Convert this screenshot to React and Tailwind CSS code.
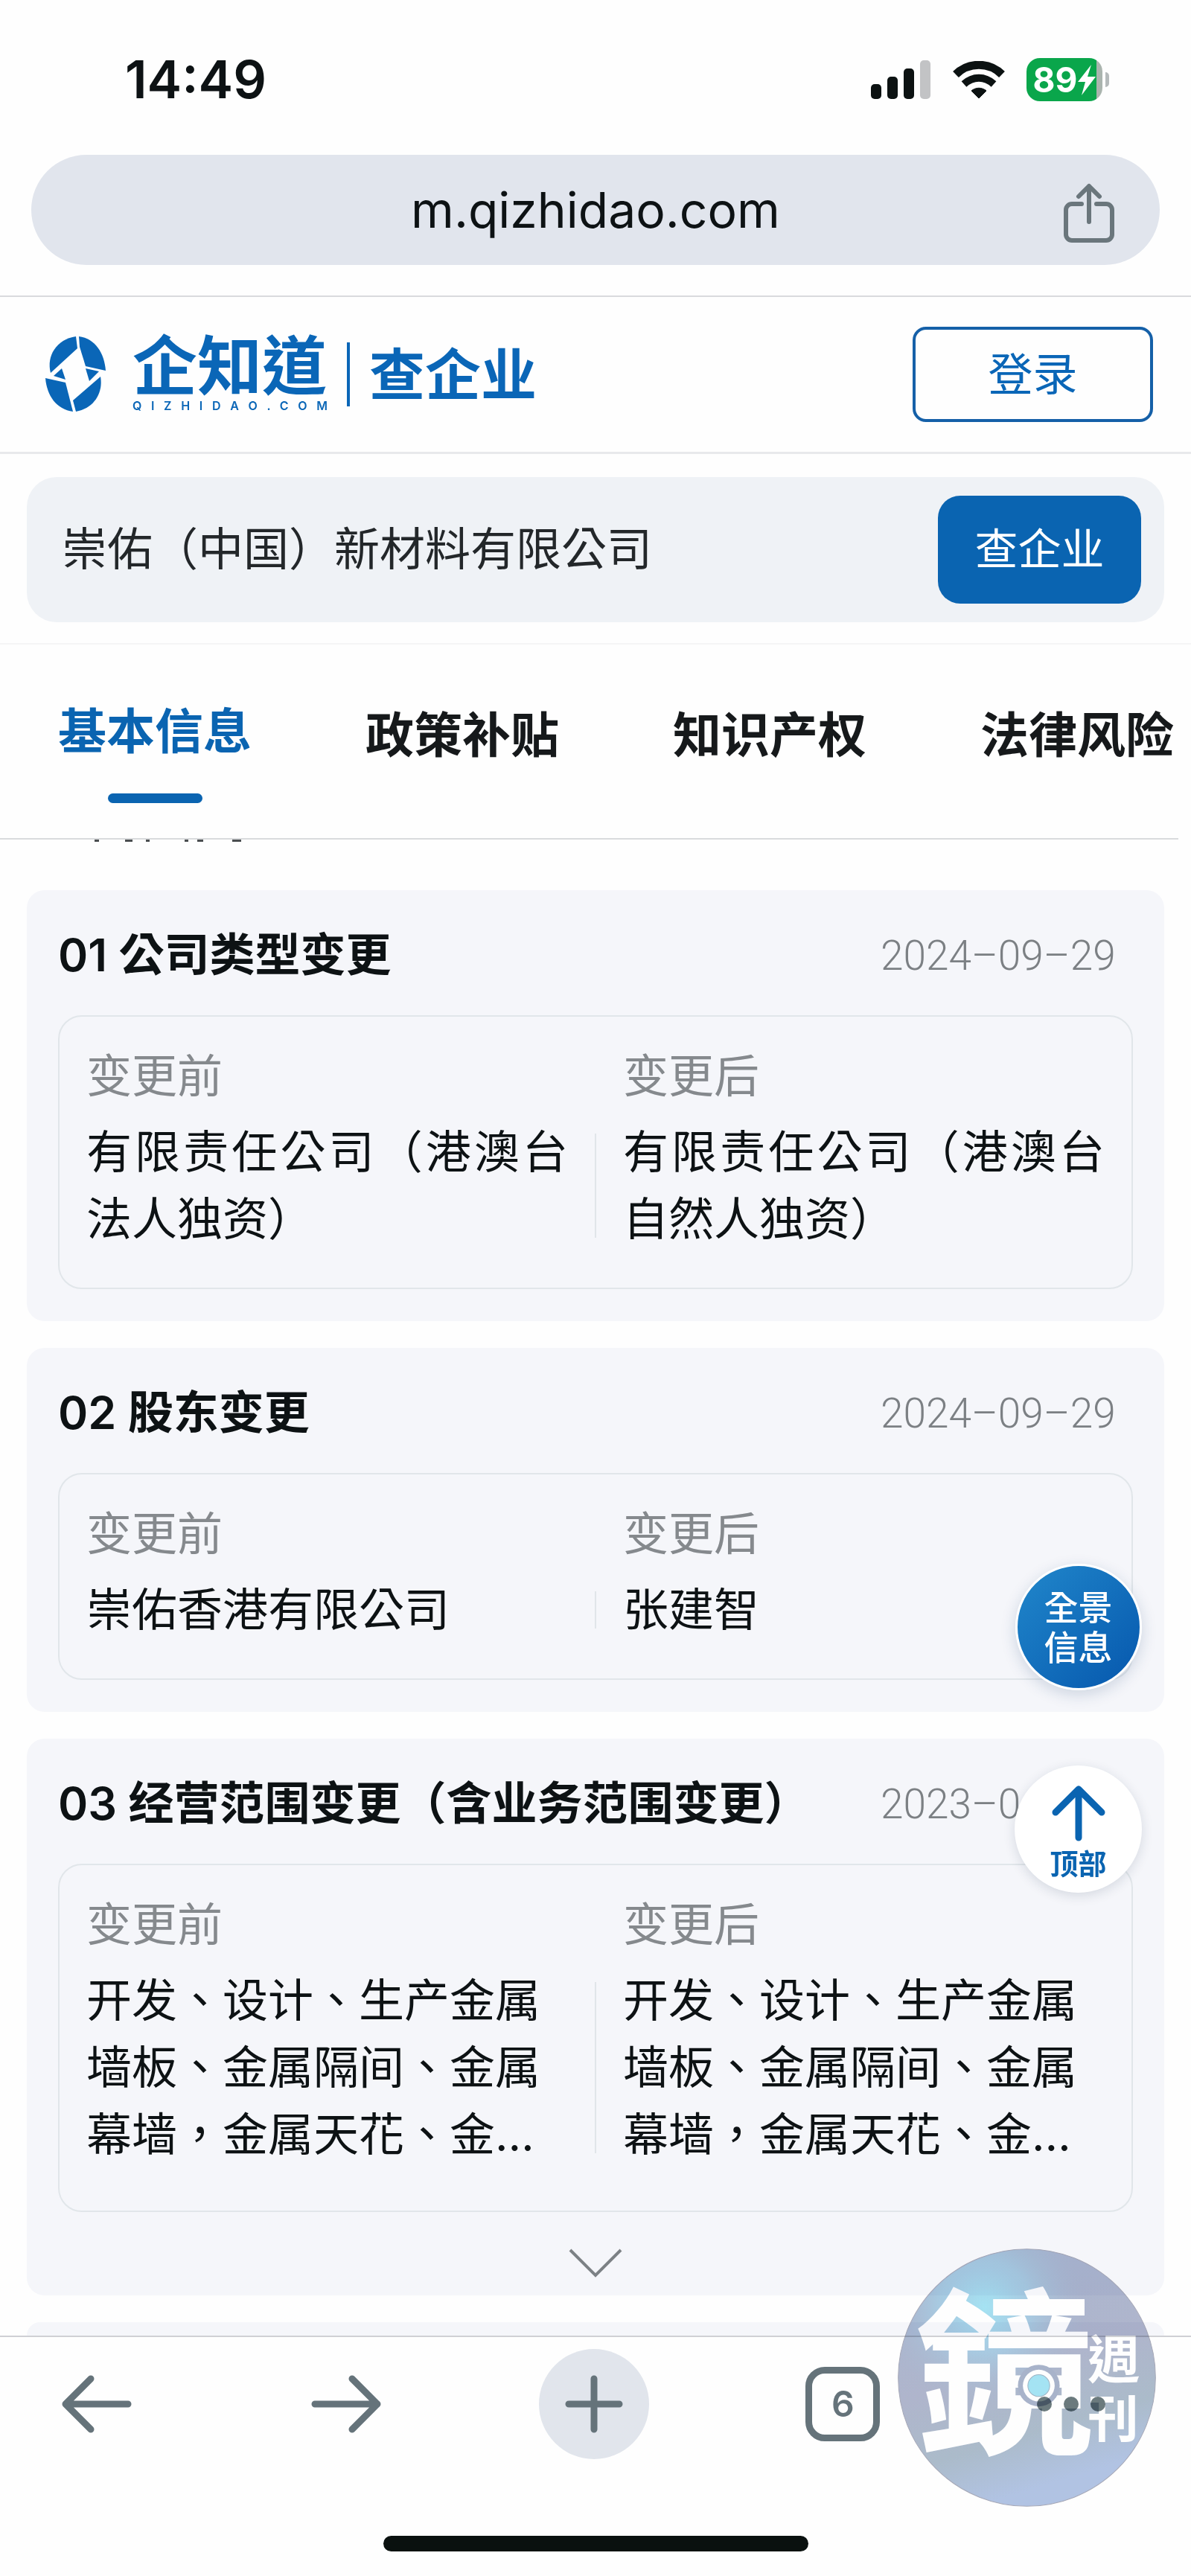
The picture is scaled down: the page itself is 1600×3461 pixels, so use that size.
import { useState } from 'react';

const TABS = ['基本信息', '政策补贴', '知识产权', '法律风险'];

const RECORDS = [
  {
    no: '01',
    title: '公司类型变更',
    date: '2024–09–29',
    before: '有限责任公司（港澳台法人独资）',
    after: '有限责任公司（港澳台自然人独资）',
  },
  {
    no: '02',
    title: '股东变更',
    date: '2024–09–29',
    before: '崇佑香港有限公司',
    after: '张建智',
  },
  {
    no: '03',
    title: '经营范围变更（含业务范围变更）',
    date: '2023–0',
    before: '开发、设计、生产金属墙板、金属隔间、金属幕墙，金属天花、金…',
    after: '开发、设计、生产金属墙板、金属隔间、金属幕墙，金属天花、金…',
    clamped: true,
  },
];

function StatusBar() {
  return (
    <div className="flex items-center justify-between h-[86px] mt-16 pl-[168px] pr-[110px]">
      <span className="text-[70px] leading-none font-semibold">14:49</span>
      <div className="flex items-center gap-[29px]">
        <svg width="81" height="52" viewBox="0 0 81 52" aria-hidden="true">
          <rect x="0" y="32" width="14" height="20" rx="5" fill="#0c1212" />
          <rect x="22" y="22" width="14" height="30" rx="5" fill="#0c1212" />
          <rect x="44" y="11" width="14" height="41" rx="5" fill="#0c1212" />
          <rect x="66" y="0" width="14" height="52" rx="5" fill="#c2c3c5" />
        </svg>
        <svg width="70" height="50" viewBox="0 0 70 50" fill="none" stroke="#0c1212" aria-hidden="true">
          <path d="M4 18C21 1 49 1 66 18" strokeWidth="11" />
          <path d="M15 31C27 20 43 20 55 31" strokeWidth="10" />
          <path d="M25 40C31 35 39 35 45 40L35 50Z" fill="#0c1212" strokeWidth="1" />
        </svg>
        <div className="flex items-center gap-1">
          <div className="flex items-center justify-center w-[102px] h-[58px] rounded-[18px] bg-linear-to-r from-[#0aa64b] from-92% to-[#aab4ae] to-92% text-white">
            <span className="text-[46px] leading-none font-bold">89</span>
            <svg width="25" height="44" viewBox="0 0 25 44" fill="#fff" aria-hidden="true">
              <path d="M19 2L1 25h10L6 43 25 18H14Z" />
            </svg>
          </div>
          <span className="w-[5px] h-5 rounded-r-full bg-[#b5babb]" />
        </div>
      </div>
    </div>
  );
}

function AddressBar() {
  return (
    <div className="relative flex items-center justify-center h-[148px] mx-[42px] mt-[58px] rounded-full bg-[#e1e5ed]">
      <span className="text-[66px] leading-none">m.qizhidao.com</span>
      <button type="button" aria-label="分享" className="absolute right-[61px] top-[38px]">
        <svg width="68" height="80" viewBox="0 0 68 80" fill="none" stroke="#6a767c" strokeWidth="6" strokeLinecap="round" strokeLinejoin="round">
          <path d="M24 28H11a8 8 0 0 0-8 8v33a8 8 0 0 0 8 8h46a8 8 0 0 0 8-8V36a8 8 0 0 0-8-8H44" />
          <path d="M34 52V4M20 18L34 4l14 14" />
        </svg>
      </button>
    </div>
  );
}

function Emblem() {
  return (
    <svg width="82" height="102" viewBox="0 0 82 102" fill="#0a66b7" aria-hidden="true">
      <path d="M42 0C16 4 2 26 8 49L44 16Z" />
      <path d="M46 0C68 3 80 22 82 46L55 40 47 14Z" />
      <path d="M12 53L23 43 28 58Z" />
      <path d="M55 43L73 47 60 60Z" />
      <path d="M1 56L28 62 38 101C16 98 3 80 1 56Z" />
      <path d="M75 54C79 76 66 97 42 101L38 86Z" />
    </svg>
  );
}

function SiteHeader() {
  return (
    <header className="flex items-center justify-between h-[211px] pl-[60px] pr-[51px] border-b-3 border-[#e8e9ec]">
      <a href="#home" className="flex items-center text-[#0a66b7]">
        <Emblem />
        <span className="flex flex-col w-[262px] ml-9">
          <span className="text-[87px] leading-[84px] font-bold">企知道</span>
          <span className="text-[16px] leading-[20px] font-semibold whitespace-nowrap [text-align-last:justify]">Q I Z H I D A O . C O M</span>
        </span>
        <span className="w-1 h-[86px] mx-[26px] bg-[#0a66b7]" />
        <span className="text-[75px] leading-none font-bold">查企业</span>
      </a>
      <button type="button" className="w-[323px] h-[128px] border-4 border-[#1560a8] rounded-[18px] text-[60px] text-[#0a66b7]">
        登录
      </button>
    </header>
  );
}

function SearchBar() {
  const [keyword, setKeyword] = useState('崇佑（中国）新材料有限公司');

  return (
    <div className="px-9 pt-[31px] pb-7 border-b-2 border-[#f5f5f6]">
      <form
        onSubmit={(e) => e.preventDefault()}
        className="flex items-center h-[195px] pl-[47px] pr-[31px] rounded-[40px] bg-[#eff2f6]"
      >
        <label htmlFor="keyword" className="sr-only">企业名称</label>
        <input
          id="keyword"
          type="text"
          value={keyword}
          onChange={(e) => setKeyword(e.target.value)}
          className="flex-1 min-w-0 text-[61px] text-[#23272a] bg-transparent outline-none"
        />
        <button type="submit" className="w-[273px] h-[145px] rounded-[30px] bg-[#0a64b1] text-[58px] text-white">
          查企业
        </button>
      </form>
    </div>
  );
}

function Tabs() {
  const [active, setActive] = useState(0);

  return (
    <div className="pr-[17px]">
      <nav className="flex gap-[153px] h-[262px] pl-[78px] border-b-2 border-[#d9dbdd]">
        {TABS.map((tab, i) => (
          <button
            key={tab}
            type="button"
            onClick={() => setActive(i)}
            className={
              i === active
                ? 'flex flex-col items-center shrink-0 pt-[72px] text-[65px] leading-[90px] font-semibold text-[#0a64b1]'
                : 'flex flex-col items-center shrink-0 pt-[77px] text-[65px] leading-[90px] font-semibold text-[#16191b]'
            }
          >
            {tab}
            {i === active && <span className="w-[127px] h-[13px] mt-[38px] rounded-full bg-[#0a64b1]" />}
          </button>
        ))}
      </nav>
    </div>
  );
}

function Record({ record }) {
  return (
    <article className="px-[42px] rounded-3xl bg-[#f5f6fa]">
      <div className="flex items-center justify-between h-[168px] pt-2 pr-6">
        <h2 className="text-[61px] font-semibold whitespace-nowrap">{record.no} {record.title}</h2>
        <time className="w-[315px] font-['Roboto'] text-[55px] font-light text-[#7c8084] whitespace-nowrap">{record.date}</time>
      </div>
      <dl
        className={
          record.clamped
            ? 'grid grid-cols-[1fr_2px_1fr] gap-x-9 gap-y-3 px-9 pt-[35px] pb-[57px] border-2 border-[#e1e6ea] rounded-[32px] text-[61px] leading-[90px]'
            : 'grid grid-cols-[1fr_2px_1fr] gap-x-9 gap-y-3 px-9 pt-[35px] pb-[47px] border-2 border-[#e1e6ea] rounded-[32px] text-[61px] leading-[90px] text-justify'
        }
      >
        <dt className="row-start-1 col-start-1 text-[#85898d]">变更前</dt>
        <dd className="row-start-2 col-start-1">{record.before}</dd>
        <dt className="row-start-1 col-start-3 text-[#85898d]">变更后</dt>
        <dd className="row-start-2 col-start-3">{record.after}</dd>
        <div className="row-start-2 col-start-2 my-5 bg-[#e1e5e9]" />
      </dl>
      {record.clamped ? (
        <button type="button" aria-label="展开" className="flex justify-center w-full h-[112px] pt-[48px]">
          <svg width="72" height="42" viewBox="0 0 72 42" fill="none" stroke="#7c8185" strokeWidth="4">
            <path d="M2 3l34 34L70 3" />
          </svg>
        </button>
      ) : (
        <div className="h-[43px]" />
      )}
    </article>
  );
}

function FloatingActions() {
  return (
    <div className="absolute right-[66px] bottom-[595px] flex flex-col items-center gap-[101px]">
      <button
        type="button"
        className="w-[170px] h-[170px] border-3 border-white rounded-full bg-linear-to-br from-[#2187cb] to-[#0757ad] text-[46px] leading-[54px] font-medium text-white shadow-[0_6px_20px_rgba(20,60,110,0.18)]"
      >
        全景
        <br />
        信息
      </button>
      <button
        type="button"
        className="flex flex-col items-center w-[171px] h-[171px] pt-[27px] rounded-full bg-white text-[38px] leading-[50px] font-semibold text-[#0a64b1] shadow-[0_4px_16px_rgba(20,40,70,0.14)]"
      >
        <svg width="72" height="76" viewBox="0 0 72 76" fill="none" stroke="#0a64b1" strokeWidth="9" strokeLinecap="round" strokeLinejoin="round" aria-hidden="true">
          <path d="M36 70V5M5 36L36 5l31 31" />
        </svg>
        <span className="mt-1">顶部</span>
      </button>
    </div>
  );
}

function BrowserToolbar() {
  return (
    <footer className="border-t-2 border-[#cfd0d4]">
      <div className="flex items-center justify-between h-[179px] pl-[82px] pr-[115px]">
        <button type="button" aria-label="后退" className="pr-7">
          <svg width="96" height="80" viewBox="0 0 96 80" fill="none" stroke="#65737a" strokeWidth="9" strokeLinecap="round" strokeLinejoin="round">
            <path d="M90 40H6M40 6L6 40l34 34" />
          </svg>
        </button>
        <button type="button" aria-label="前进">
          <svg width="96" height="80" viewBox="0 0 96 80" fill="none" stroke="#65737a" strokeWidth="9" strokeLinecap="round" strokeLinejoin="round">
            <path d="M6 40h84M56 6l34 34-34 34" />
          </svg>
        </button>
        <button type="button" aria-label="新标签页" className="flex items-center justify-center w-[148px] h-[148px] rounded-full bg-[#e1e5ec]">
          <svg width="80" height="80" viewBox="0 0 80 80" fill="none" stroke="#65737a" strokeWidth="9" strokeLinecap="round">
            <path d="M40 6v68M6 40h68" />
          </svg>
        </button>
        <button type="button" className="w-[100px] h-[100px] border-9 border-[#65737a] rounded-[26px] text-[48px] leading-none font-semibold text-[#65737a]">
          6
        </button>
        <button type="button" aria-label="更多">
          <svg width="92" height="20" viewBox="0 0 92 20" fill="#6b7a7d">
            <circle cx="10" cy="10" r="10" />
            <circle cx="46" cy="10" r="10" />
            <circle cx="82" cy="10" r="10" />
          </svg>
        </button>
      </div>
      <div className="w-[571px] h-[21px] mx-auto mt-[88px] mb-[33px] rounded-full bg-[#0a110f]" />
    </footer>
  );
}

function Watermark() {
  return (
    <svg
      className="absolute right-[47px] bottom-[93px] mix-blend-multiply pointer-events-none"
      width="347"
      height="347"
      viewBox="80 65 1040 1040"
      role="img"
      aria-label="鏡週刊"
    >
      <defs>
        <radialGradient id="wmTop" gradientUnits="userSpaceOnUse" cx="430" cy="300" r="420">
          <stop offset="0" stopColor="#a6e4f4" />
          <stop offset="0.45" stopColor="#a8cfe6" stopOpacity="0.8" />
          <stop offset="1" stopColor="#aab6cd" stopOpacity="0" />
        </radialGradient>
        <linearGradient id="wmBase" x1="0" y1="0" x2="0.3" y2="1">
          <stop offset="0" stopColor="#a9b8d2" />
          <stop offset="0.55" stopColor="#b0b6cd" />
          <stop offset="0.8" stopColor="#acbccb" />
          <stop offset="1" stopColor="#b2c4e4" />
        </linearGradient>
      </defs>
      <circle cx="600" cy="585" r="518" fill="url(#wmBase)" stroke="#a7a9b8" strokeWidth="3" />
      <circle cx="600" cy="585" r="516" fill="url(#wmTop)" />
      <g fill="#fff" fontWeight="700" fontFamily="'Noto Sans CJK TC', sans-serif">
        <text x="150" y="835" fontSize="720">鏡</text>
        <text x="845" y="590" fontSize="210">週</text>
        <text x="845" y="825" fontSize="205">刊</text>
      </g>
      <circle cx="648" cy="617" r="84" fill="#a9b4cb" />
      <circle cx="648" cy="617" r="64" fill="#fff" />
      <circle cx="648" cy="617" r="44" fill="#a5e4f4" stroke="#9fb4c4" strokeWidth="3" />
    </svg>
  );
}

export default function App() {
  return (
    <div className="relative flex flex-col overflow-hidden bg-[#fefefe] font-['Inter','Noto_Sans_CJK_TC',sans-serif] text-[#0d1214]">
      <div className="pb-[41px] border-b-2 border-[#d9dadd]">
        <StatusBar />
        <AddressBar />
      </div>
      <SiteHeader />
      <SearchBar />
      <Tabs />

      <main className="relative flex flex-col gap-9 px-9">
        {/* bottom edge of the heading scrolled under the tabs */}
        <svg className="-mb-9 ml-[88px]" width="208" height="68" viewBox="0 0 208 68" fill="#4a4e50" aria-hidden="true">
          <path d="M3 0h6v3H3zM44 0h10v3H44zM72 0h5v3h-5zM124 0h5v3h-5zM141 0h8v3h-8zM188 0h12v3h-12z" />
        </svg>
        {RECORDS.map((record) => (
          <Record key={record.no} record={record} />
        ))}
        <div className="h-[18px] rounded-t-3xl bg-[#f5f6fa]" />
        <FloatingActions />
      </main>

      <BrowserToolbar />
      <Watermark />
    </div>
  );
}
